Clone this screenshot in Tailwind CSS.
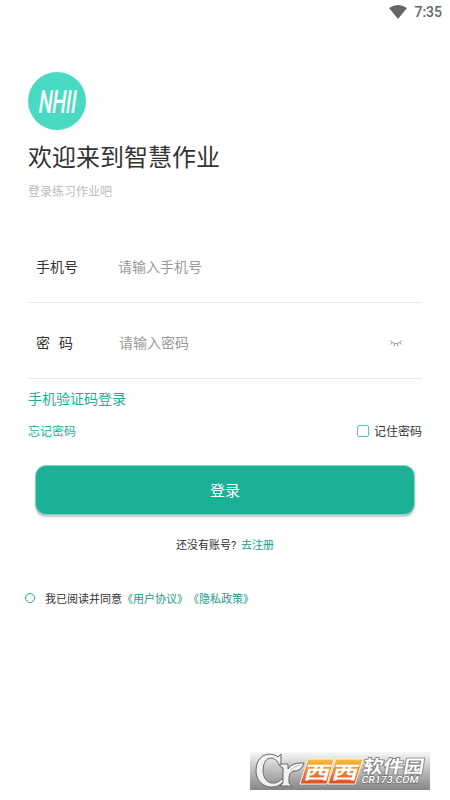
<!DOCTYPE html>
<html lang="zh-CN">
<head>
<meta charset="utf-8">
<title>登录</title>
<script src="https://cdn.jsdelivr.net/npm/@tailwindcss/browser@4"></script>
</head>
<body class="bg-white">
<div class="flex h-[800px] w-[450px] flex-col overflow-hidden bg-white font-['Roboto','Noto_Sans_CJK_SC',sans-serif] text-[#333]">
  <header class="flex h-6 shrink-0 items-center justify-end gap-[7px] pr-2 text-[#666]">
    <svg class="h-[14px] w-[18px]" viewBox="0 0 18 14"><path fill="#666" d="M0 3Q9-3 18 3L9 14Z"/></svg>
    <span class="text-[14px] leading-6 font-medium">7:35</span>
  </header>

  <main class="flex flex-col px-7 pt-12">
    <svg class="size-[58px] overflow-visible" viewBox="0 0 58 58">
      <circle cx="29" cy="29" r="29" fill="#48dac2"/>
      <text transform="translate(9.5 40.5) skewX(-8) scale(.61 1)" textLength="62" lengthAdjust="spacing" font-family="Roboto, sans-serif" font-size="32" font-weight="500" fill="#fff">NHII</text>
    </svg>
    <h1 class="mt-[10px] text-[24px] leading-9">欢迎来到智慧作业</h1>
    <p class="mt-[7px] text-[12px] leading-[18px] text-[#bbb]">登录练习作业吧</p>

    <div class="mt-[31px] flex h-[71px] items-center border-b border-[#eaeaea] pl-2 text-[14px]">
      <span class="w-[82px]">手机号</span>
      <span class="text-[#999]">请输入手机号</span>
    </div>
    <div class="flex h-[76px] items-center border-b border-[#eaeaea] pt-[6px] pr-5 pl-2 text-[14px]">
      <span class="flex w-[83px] gap-[9px]"><span>密</span><span>码</span></span>
      <span class="flex-1 text-[#999]">请输入密码</span>
      <svg class="h-[7px] w-3" viewBox="0 0 12 7" fill="none" stroke="#999" stroke-width="1"><path d="M.3.8Q6 6.6 11.7.8M2 2.6.5 4.6M4.5 4 4 6.4M7.5 4 8 6.4M10 2.6 11.5 4.6"/></svg>
    </div>

    <a class="mt-[9px] text-[14px] leading-[22px] text-[#1dad95]">手机验证码登录</a>
    <div class="mt-[11px] flex h-5 items-center justify-between text-[12px]">
      <a class="pt-[2px] text-[#1dad95]">忘记密码</a>
      <label class="flex items-center gap-[5px]"><span class="size-3 rounded-[2px] border border-[#5cc4b7]"></span><span class="pt-[2px]">记住密码</span></label>
    </div>
    <button class="mx-[7px] mt-[24px] h-[50px] rounded-[11px] border border-[#7bd7c5] bg-[#1cb096] pt-[2px] text-[15px] text-white shadow-[0_2px_2px_rgba(0,0,0,0.22)]">登录</button>
    <p class="mt-[22px] flex h-[18px] items-center justify-center gap-[5px] text-[11px]"><span>还没有账号?</span><a class="text-[#159d87]">去注册</a></p>
    <div class="-ml-[3px] mt-[35px] flex h-[18px] items-center text-[11px] whitespace-nowrap">
      <span class="mr-[10px] mb-[3px] size-[10px] rounded-full border border-[#22a791]"></span>
      <span class="pt-[2px]">我已阅读并同意</span><span class="pt-[2px] text-[#159d87]">《用户协议》</span><span class="pt-[2px] text-[#159d87]">《隐私政策》</span>
    </div>
  </main>

  <footer class="mt-auto mr-5 mb-[10px] h-[38px] w-[180px] self-end">
    <svg class="h-[38px] w-[180px]" viewBox="0 0 180 38">
      <defs>
        <linearGradient id="bar" x2="0" y2="1"><stop stop-color="#f8f8f8"/><stop offset=".5" stop-color="#bcbcbc"/><stop offset="1" stop-color="#858585"/></linearGradient>
        <linearGradient id="orange" x2="0" y2="1"><stop stop-color="#f8c03c"/><stop offset="1" stop-color="#e24a22"/></linearGradient>
      </defs>
      <rect width="180" height="38" fill="url(#bar)"/>
      <g stroke-linejoin="round">
        <path d="M31 2V13H29C27 5 14 1 13 18C13 31 24 35 32 27L34 29C24 41 6 34 6 19C6 2 20-1 28 5Z" fill="#f1f1f1" stroke="#666"/>
        <path d="M30 12H38V17Q42 10 54 11Q51 20 43 19Q39 21 39 25V31L42 34H30L33 31V16L30 14Z" fill="#f1f1f1" stroke="#666"/>
        <path d="M40 18Q45 14 50 13" fill="none" stroke="#aaa" stroke-width=".7"/>
      </g>
      <g fill="url(#orange)" stroke="#fff3dd" stroke-width="1">
        <path d="M58 7H84L77 32H50Z"/>
        <path d="M86 7H113L105 32H78Z"/>
      </g>
      <g font-family="'Noto Sans CJK SC', sans-serif" fill="#fff">
        <text transform="translate(53 26.5) skewX(-15) scale(1.18 .82)" font-size="22" font-weight="700">西</text>
        <text transform="translate(81 26.5) skewX(-15) scale(1.18 .82)" font-size="22" font-weight="700">西</text>
        <text transform="translate(112 21) skewX(-10)" font-size="18" font-weight="700" textLength="61" lengthAdjust="spacingAndGlyphs" stroke="#747474" stroke-width="1.5" paint-order="stroke">软件园</text>
      </g>
      <text transform="translate(111 31) skewX(-10)" font-family="Roboto, sans-serif" font-size="10" font-weight="500" textLength="57" lengthAdjust="spacingAndGlyphs" fill="#fff" stroke="#747474" stroke-width="1.4" paint-order="stroke">CR173.COM</text>
    </svg>
  </footer>
</div>
</body>
</html>
